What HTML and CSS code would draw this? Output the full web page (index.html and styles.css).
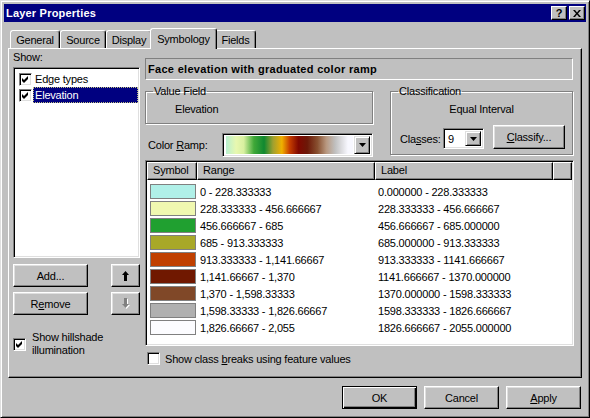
FILE: index.html
```html
<!DOCTYPE html>
<html lang="en">
<head>
  <meta charset="UTF-8">
  <title>Layer Properties</title>
  <link rel="stylesheet" href="styles.css">
</head>
<body>
  <div class="window">
    <div class="titlebar">
      <span class="title">Layer Properties</span>
      <div class="title-btns">
        <span class="tbtn help">?</span>
        <span class="tbtn">
          <svg width="8" height="7" viewBox="0 0 8 7"><path d="M0 0h2l2 2.5L6 0h2L5 3.5 8 7H6L4 4.5 2 7H0l3-3.5z" fill="#000"/></svg>
        </span>
      </div>
    </div>

    <div class="tabs">
      <div class="tab t-general">General</div>
      <div class="tab t-source">Source</div>
      <div class="tab t-display">Display</div>
      <div class="tab t-sym on">Symbology</div>
      <div class="tab t-fields">Fields</div>
    </div>

    <div class="panel">
      <!-- left column: layers list -->
      <div class="left">
        <div class="lbl">Show:</div>
        <div class="listbox">
          <div class="item">
            <span class="check"><svg width="9" height="9" viewBox="0 0 9 9"><polygon points="1,3 3,5 7,1 7,4 3,8 1,6" fill="#000"/></svg></span>
            <span class="item-text">Edge types</span>
          </div>
          <div class="item">
            <span class="check"><svg width="9" height="9" viewBox="0 0 9 9"><polygon points="1,3 3,5 7,1 7,4 3,8 1,6" fill="#000"/></svg></span>
            <span class="item-text sel">Elevation</span>
          </div>
        </div>
        <div class="btnrow">
          <button class="btn wide">Add...</button>
          <button class="btn small">
            <svg width="7" height="10" viewBox="0 0 7 10"><path d="M3.5 0L7 4H5v6H2V4H0z" fill="#000"/></svg>
          </button>
        </div>
        <div class="btnrow second">
          <button class="btn wide">R<u>e</u>move</button>
          <button class="btn small">
            <svg width="8" height="11" viewBox="0 0 8 11"><path d="M3 1h3v6h2L4.5 11 1 7h2z" fill="#fff"/><path d="M2 0h3v6h2L3.5 10 0 6h2z" fill="#808080"/></svg>
          </button>
        </div>
        <div class="hillshade">
          <span class="check"><svg width="9" height="9" viewBox="0 0 9 9"><polygon points="1,3 3,5 7,1 7,4 3,8 1,6" fill="#000"/></svg></span>
          <span class="hs-text">Show hillshade<br>illumination</span>
        </div>
      </div>

      <!-- right column: renderer settings -->
      <div class="right">
        <div class="headline">Face elevation with graduated color ramp</div>

        <div class="grp-row">
          <div class="grp-left">
            <fieldset class="fs value-field">
              <legend>Value Field</legend>
              <div class="field-name">Elevation</div>
            </fieldset>
            <div class="ramp-row">
              <span class="ramp-lbl">Color <u>R</u>amp:</span>
              <div class="combo ramp-combo">
                <div class="ramp"></div>
                <span class="drop"><svg width="7" height="4" viewBox="0 0 7 4"><polygon points="0,0 7,0 3.5,4" fill="#000"/></svg></span>
              </div>
            </div>
          </div>

          <fieldset class="fs classification">
            <legend>Classification</legend>
            <div class="method">Equal Interval</div>
            <div class="classes-row">
              <span class="classes-lbl">Cla<u>s</u>ses:</span>
              <div class="combo classes-combo">
                <span class="combo-val">9</span>
                <span class="drop"><svg width="7" height="4" viewBox="0 0 7 4"><polygon points="0,0 7,0 3.5,4" fill="#000"/></svg></span>
              </div>
              <button class="btn classify"><u>C</u>lassify...</button>
            </div>
          </fieldset>
        </div>

        <div class="table">
          <div class="thead">
            <div class="th c-sym">Symbol</div>
            <div class="th c-range">Range</div>
            <div class="th c-label">Label</div>
            <div class="th c-fill"></div>
          </div>
          <div class="rows">
            <div class="row"><span class="sw c1"></span><span class="rng">0 - 228.333333</span><span>0.000000 - 228.333333</span></div>
            <div class="row"><span class="sw c2"></span><span class="rng">228.333333 - 456.666667</span><span>228.333333 - 456.666667</span></div>
            <div class="row"><span class="sw c3"></span><span class="rng">456.666667 - 685</span><span>456.666667 - 685.000000</span></div>
            <div class="row"><span class="sw c4"></span><span class="rng">685 - 913.333333</span><span>685.000000 - 913.333333</span></div>
            <div class="row"><span class="sw c5"></span><span class="rng">913.333333 - 1,141.66667</span><span>913.333333 - 1141.666667</span></div>
            <div class="row"><span class="sw c6"></span><span class="rng">1,141.66667 - 1,370</span><span>1141.666667 - 1370.000000</span></div>
            <div class="row"><span class="sw c7"></span><span class="rng">1,370 - 1,598.33333</span><span>1370.000000 - 1598.333333</span></div>
            <div class="row"><span class="sw c8"></span><span class="rng">1,598.33333 - 1,826.66667</span><span>1598.333333 - 1826.666667</span></div>
            <div class="row"><span class="sw c9"></span><span class="rng">1,826.66667 - 2,055</span><span>1826.666667 - 2055.000000</span></div>
          </div>
        </div>

        <div class="breaks">
          <span class="check"></span>
          <span>Show class <u>b</u>reaks using feature values</span>
        </div>
      </div>
    </div>

    <div class="footer">
      <button class="btn dlg default">OK</button>
      <button class="btn dlg">Cancel</button>
      <button class="btn dlg"><u>A</u>pply</button>
    </div>
  </div>
</body>
</html>
```

FILE: styles.css
```css
* {
  box-sizing: border-box;
}
body {
  margin: 0;
  font-family: "Liberation Sans", Arial, sans-serif;
  font-size: 11px;
  letter-spacing: -0.2px;
  color: #000;
}
u {
  text-decoration: underline;
  text-underline-offset: 1px;
}

.window {
  width: 590px;
  height: 418px;
  background: #c0c0c0;
  border: 1px solid;
  border-color: #dfdfdf #000 #000 #dfdfdf;
  box-shadow: inset 1px 1px #fff, inset -1px -1px #808080;
  padding: 3px;
}

/* title bar */
.titlebar {
  height: 18px;
  background: #000080;
  color: #fff;
  display: flex;
  align-items: center;
  justify-content: space-between;
  padding: 0 1px 0 2px;
}
.title {
  font-weight: bold;
  font-size: 11px;
  letter-spacing: 0.2px;
}
.title-btns {
  display: flex;
  gap: 2px;
}
.tbtn {
  width: 16px;
  height: 14px;
  background: #c0c0c0;
  border: 1px solid;
  border-color: #fff #000 #000 #fff;
  box-shadow: inset -1px -1px #808080;
  display: flex;
  align-items: center;
  justify-content: center;
  color: #000;
}
.tbtn.help {
  font-weight: bold;
  font-size: 11px;
  line-height: 1;
}

/* tabs */
.tabs {
  display: flex;
  align-items: flex-end;
  height: 20px;
  margin: 6px 0 0 6px;
  position: relative;
  z-index: 1;
}
.tab {
  height: 18px;
  background: #c0c0c0;
  border: 1px solid #fff;
  border-bottom: none;
  border-right-color: #000;
  box-shadow: inset -1px 0 #808080;
  border-radius: 3px 3px 0 0;
  display: flex;
  align-items: center;
  justify-content: center;
}
.tab.on {
  height: 21px;
  margin: 0 -2px -1px -2px;
  position: relative;
  z-index: 2;
}
.t-general { width: 50px; }
.t-source { width: 46px; }
.t-display { width: 46px; }
.t-sym { width: 67px; }
.t-fields { width: 41px; }

/* panel */
.panel {
  margin-left: 4px;
  width: 574px;
  height: 330px;
  border: 1px solid;
  border-color: #fff #000 #000 #fff;
  box-shadow: inset -1px -1px #808080;
  display: flex;
  gap: 5px;
  padding-left: 4px;
}

.left {
  width: 127px;
  padding-top: 2px;
}
.lbl {
  height: 13px;
  line-height: 13px;
}
.listbox {
  margin-top: 3px;
  height: 191px;
  background: #fff;
  border: 1px solid;
  border-color: #808080 #fff #fff #808080;
  box-shadow: inset 1px 1px #000, inset -1px -1px #dfdfdf;
  padding: 3px 1px 0 5px;
}
.item {
  display: flex;
  align-items: center;
  height: 16px;
}
.item-text {
  flex: 1;
  height: 16px;
  line-height: 14px;
  margin-left: 1px;
  padding: 0 2px 0 1px;
  border: 1px solid transparent;
}
.item-text.sel {
  background: #000080;
  color: #fff;
  border: 1px dotted #c0c080;
}

.check {
  width: 13px;
  height: 13px;
  flex: none;
  background: #fff;
  border: 1px solid;
  border-color: #808080 #fff #fff #808080;
  box-shadow: inset 1px 1px #000, inset -1px -1px #dfdfdf;
  display: flex;
  align-items: center;
  justify-content: center;
}
.check svg {
  display: block;
}

.btn {
  font-family: inherit;
  font-size: 11px;
  letter-spacing: inherit;
  color: #000;
  background: #c0c0c0;
  border: 1px solid;
  border-color: #fff #000 #000 #fff;
  box-shadow: inset -1px -1px #808080, inset 1px 1px #dfdfdf;
  padding: 0;
  height: 23px;
  display: flex;
  align-items: center;
  justify-content: center;
}
.btnrow {
  display: flex;
  justify-content: space-between;
  margin-top: 6px;
}
.btnrow.second {
  margin-top: 5px;
}
.btn.wide { width: 75px; }
.btn.small { width: 29px; }

.hillshade {
  display: flex;
  align-items: center;
  margin-top: 16px;
}
.hs-text {
  margin-left: 6px;
  line-height: 13px;
}

/* right column */
.right {
  width: 429px;
  padding-top: 9px;
}
.headline {
  width: 428px;
  height: 22px;
  border: 1px solid;
  border-color: #808080 #fff #fff #808080;
  font-weight: bold;
  letter-spacing: 0.3px;
  padding-left: 2px;
  display: flex;
  align-items: center;
}
.grp-row {
  display: flex;
  gap: 17px;
  margin-top: 5px;
}
.grp-left {
  width: 228px;
}
.fs {
  margin: 0;
  padding: 0 7px;
  border: 1px solid #808080;
  box-shadow: inset 1px 1px #fff, 1px 1px #fff;
}
.fs legend {
  padding: 0 1px;
  line-height: 13px;
}
.value-field {
  height: 39px;
}
.field-name {
  margin: 5px 0 0 22px;
  line-height: 13px;
}
.classification {
  width: 183px;
  height: 70px;
}
.method {
  margin-top: 5px;
  line-height: 13px;
  text-align: center;
}
.classes-row {
  display: flex;
  align-items: center;
  margin-top: 9px;
}
.classes-lbl {
  width: 45px;
  padding-left: 2px;
  margin-top: 4px;
}
.combo {
  background: #fff;
  border: 1px solid;
  border-color: #808080 #fff #fff #808080;
  box-shadow: inset 1px 1px #000, inset -1px -1px #dfdfdf;
  display: flex;
  align-items: center;
  padding: 2px;
}
.drop {
  width: 16px;
  align-self: stretch;
  background: #c0c0c0;
  border: 1px solid;
  border-color: #dfdfdf #000 #000 #dfdfdf;
  box-shadow: inset 1px 1px #fff, inset -1px -1px #808080;
  display: flex;
  align-items: center;
  justify-content: center;
}
.drop svg {
  display: block;
}
.classes-combo {
  width: 41px;
  height: 21px;
  margin-top: 3px;
}
.combo-val {
  flex: 1;
  padding-left: 2px;
}
.btn.classify {
  width: 72px;
  height: 24px;
  margin-left: 9px;
}

.ramp-row {
  display: flex;
  align-items: center;
  margin-top: 9px;
}
.ramp-lbl {
  width: 77px;
  padding-left: 3px;
}
.ramp-combo {
  width: 151px;
  height: 24px;
  gap: 1px;
}
.ramp {
  flex: 1;
  align-self: stretch;
  margin: 0 0 0 1px;
  background: linear-gradient(to right,
    #b8f0d0 0%, #e8f8b0 8%, #d8f0a0 14%, #40a838 22%, #108830 30%,
    #a0a030 37%, #f0b000 44%, #c84000 50%, #800800 57%, #6c1808 64%,
    #885030 72%, #b89880 79%, #c0c0c0 86%, #f8f8ff 96%);
}

/* class table */
.table {
  margin-top: 3px;
  width: 429px;
  height: 186px;
  background: #fff;
  border: 1px solid;
  border-color: #808080 #fff #fff #808080;
  box-shadow: inset 1px 1px #000, inset -1px -1px #dfdfdf;
  padding: 1px;
}
.thead {
  display: flex;
  height: 18px;
}
.th {
  background: #c0c0c0;
  border: 1px solid;
  border-color: #fff #000 #000 #fff;
  box-shadow: inset -1px -1px #808080;
  padding-left: 5px;
  line-height: 15px;
}
.c-sym { width: 50px; }
.c-range { width: 178px; }
.c-label { width: 178px; }
.c-fill { flex: 1; }
.rows {
  padding-top: 3px;
}
.row {
  display: flex;
  align-items: center;
  height: 17px;
  white-space: nowrap;
}
.sw {
  width: 46px;
  height: 15px;
  margin: 0 4px 0 3px;
  border: 1px solid #808080;
}
.rng {
  width: 178px;
}
.c1 { background: #b0f0e8; }
.c2 { background: #f0f8b0; }
.c3 { background: #20a030; }
.c4 { background: #a8a828; }
.c5 { background: #c04000; }
.c6 { background: #701800; }
.c7 { background: #804828; }
.c8 { background: #b0b0b0; }
.c9 { background: #fcfcff; }

.breaks {
  display: flex;
  align-items: center;
  margin: 6px 0 0 2px;
  gap: 5px;
}

/* dialog buttons */
.footer {
  display: flex;
  justify-content: flex-end;
  gap: 7px;
  margin-top: 8px;
  padding-right: 5px;
}
.btn.dlg {
  width: 75px;
  height: 23px;
}
.btn.default {
  border: 1px solid #000;
  box-shadow: inset 1px 1px #fff, inset -1px -1px #000, inset -2px -2px #808080;
}
```
